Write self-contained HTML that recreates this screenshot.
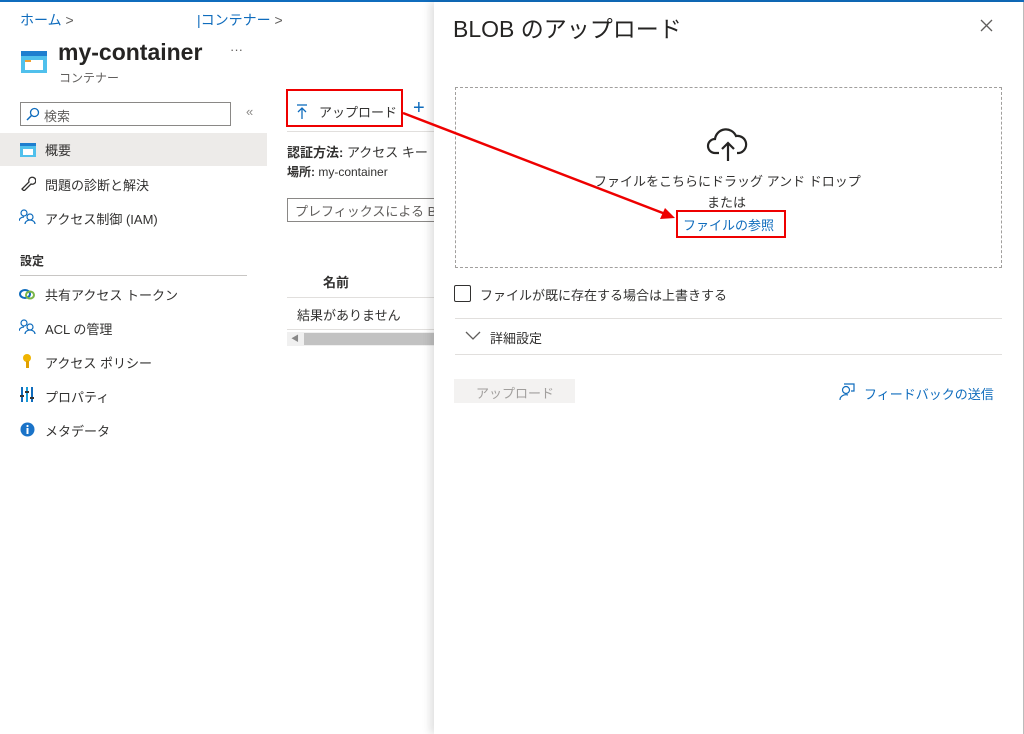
<!DOCTYPE html>
<html><head><meta charset="utf-8"><style>
*{margin:0;padding:0;box-sizing:border-box}
body{width:1024px;height:734px;overflow:hidden;background:#fff;font-family:"Liberation Sans","Noto Sans CJK JP",sans-serif;color:#323130;font-size:13px;position:relative}
.a{position:absolute;white-space:nowrap}
</style></head><body>
<div class="a" style="left:0;top:0;width:1024px;height:2px;background:#0f6cbd"></div>
<div class="a" style="left:20px;top:10px;color:#0f6cbd;font-size:14px">ホーム <span style="color:#605e5c">&gt;</span></div>
<div class="a" style="left:197px;top:10px;color:#0f6cbd;font-size:14px">|コンテナー <span style="color:#605e5c">&gt;</span></div>
<svg class="a" style="left:20px;top:50px" width="28" height="24"><rect x="1" y="1" width="26" height="22" fill="#50c0ec"/><rect x="1" y="1" width="26" height="5" fill="#1e7ecf"/><rect x="5" y="10" width="18" height="10" fill="#fff"/><rect x="5" y="10" width="6" height="2" fill="#f0a030"/></svg>
<div class="a" style="left:58px;top:39px;font-size:23px;font-weight:bold;color:#252423">my-container</div>
<div class="a" style="left:230px;top:42px;color:#605e5c">···</div>
<div class="a" style="left:59px;top:69px;font-size:12px;color:#605e5c">コンテナー</div>
<div class="a" style="left:20px;top:102px;width:211px;height:24px;border:1px solid #8a8886"></div>
<svg class="a" style="left:26px;top:107px" width="14" height="14"><circle cx="8.5" cy="5.5" r="4" fill="none" stroke="#0f6cbd" stroke-width="1.3"/><line x1="5.5" y1="8.5" x2="1" y2="13" stroke="#0f6cbd" stroke-width="1.5"/></svg>
<div class="a" style="left:44px;top:106px;font-size:13px;color:#605e5c">検索</div>
<div class="a" style="left:246px;top:104px;color:#8a8886">«</div>
<div class="a" style="left:0;top:133px;width:267px;height:33px;background:#edebe9"></div>
<svg class="a" style="left:20px;top:143px" width="16" height="14"><rect width="16" height="14" fill="#50c0ec"/><rect width="16" height="3" fill="#1e7ecf"/><rect x="3" y="6" width="10" height="6" fill="#fff"/></svg>
<div class="a" style="left:45px;top:140px">概要</div>
<svg class="a" style="left:20px;top:175px" width="16" height="16"><path d="M2 14l7-7a3.5 3.5 0 1 1 2 2l-7 7z" fill="none" stroke="#323130" stroke-width="1.3"/></svg>
<div class="a" style="left:45px;top:175px">問題の診断と解決</div>
<svg class="a" style="left:19px;top:209px" width="18" height="16"><circle cx="5" cy="4" r="3" fill="none" stroke="#0f6cbd" stroke-width="1.2"/><circle cx="11" cy="8" r="3" fill="none" stroke="#0f6cbd" stroke-width="1.2"/><path d="M6 15a5 4 0 0 1 10 0M0 12a5 4 0 0 1 5-4" fill="none" stroke="#0f6cbd" stroke-width="1.2"/></svg>
<div class="a" style="left:45px;top:209px">アクセス制御 (IAM)</div>
<div class="a" style="left:20px;top:252px;font-size:12px;font-weight:bold">設定</div>
<div class="a" style="left:20px;top:275px;width:227px;height:1px;background:#c8c6c4"></div>
<svg class="a" style="left:19px;top:288px" width="16" height="12"><ellipse cx="6" cy="6" rx="5" ry="4" fill="none" stroke="#0f6cbd" stroke-width="2"/><ellipse cx="11" cy="7" rx="4" ry="3.5" fill="none" stroke="#7ab648" stroke-width="2"/></svg>
<div class="a" style="left:45px;top:285px">共有アクセス トークン</div>
<svg class="a" style="left:19px;top:319px" width="18" height="16"><circle cx="5" cy="4" r="3" fill="none" stroke="#0f6cbd" stroke-width="1.2"/><circle cx="11" cy="8" r="3" fill="none" stroke="#0f6cbd" stroke-width="1.2"/><path d="M6 15a5 4 0 0 1 10 0M0 12a5 4 0 0 1 5-4" fill="none" stroke="#0f6cbd" stroke-width="1.2"/></svg>
<div class="a" style="left:45px;top:319px">ACL の管理</div>
<svg class="a" style="left:22px;top:353px" width="10" height="16"><circle cx="5" cy="5" r="4" fill="#f0b400"/><rect x="4" y="8" width="3" height="7" fill="#e0a000"/></svg>
<div class="a" style="left:45px;top:353px">アクセス ポリシー</div>
<svg class="a" style="left:20px;top:387px" width="14" height="15"><rect x="1" y="0" width="2" height="15" fill="#0f6cbd"/><rect x="6" y="0" width="2" height="15" fill="#1a9bd7"/><rect x="11" y="0" width="2" height="15" fill="#0f6cbd"/><rect x="0" y="8" width="4" height="2" fill="#333"/><rect x="5" y="4" width="4" height="2" fill="#333"/><rect x="10" y="10" width="4" height="2" fill="#333"/></svg>
<div class="a" style="left:45px;top:387px">プロパティ</div>
<svg class="a" style="left:20px;top:422px" width="15" height="15"><circle cx="7.5" cy="7.5" r="7" fill="#1a73c8"/><rect x="6.5" y="6" width="2" height="6" fill="#fff"/><circle cx="7.5" cy="4" r="1.1" fill="#fff"/></svg>
<div class="a" style="left:45px;top:421px">メタデータ</div>
<div class="a" style="left:286px;top:89px;width:117px;height:38px;border:2px solid #e00"></div>
<svg class="a" style="left:296px;top:104px" width="12" height="16"><line x1="1" y1="1" x2="11" y2="1" stroke="#0f6cbd" stroke-width="1.3"/><path d="M6 15V4M2 8l4-4 4 4" fill="none" stroke="#0f6cbd" stroke-width="1.3"/></svg>
<div class="a" style="left:319px;top:102px;font-size:13px">アップロード</div>
<div class="a" style="left:413px;top:97px;color:#0f6cbd;font-size:20px">+</div>
<div class="a" style="left:287px;top:131px;width:147px;height:1px;background:#e1dfdd"></div>
<div class="a" style="left:287px;top:142px;font-size:13px"><b>認証方法:</b> アクセス キー</div>
<div class="a" style="left:287px;top:163px;font-size:12px"><b>場所:</b> my-container</div>
<div class="a" style="left:287px;top:198px;width:160px;height:24px;border:1px solid #8a8886"></div>
<div class="a" style="left:295px;top:201px;color:#605e5c">プレフィックスによる B</div>
<div class="a" style="left:323px;top:272px;font-weight:bold">名前</div>
<div class="a" style="left:287px;top:297px;width:147px;height:1px;background:#e1dfdd"></div>
<div class="a" style="left:297px;top:305px">結果がありません</div>
<div class="a" style="left:287px;top:329px;width:147px;height:1px;background:#e1dfdd"></div>
<div class="a" style="left:287px;top:332px;width:147px;height:14px;background:#f0f0f0"></div>
<div class="a" style="left:304px;top:333px;width:130px;height:12px;background:#c2c2c2"></div>
<div class="a" style="left:291px;top:333px;font-size:8px;color:#888">◀</div>
<!-- panel -->
<div class="a" style="left:434px;top:2px;width:590px;height:732px;background:#fff;box-shadow:-4px 0 8px rgba(0,0,0,.12);border-right:1px solid #bbb"></div>
<div class="a" style="left:453px;top:10px;font-size:23px;color:#252423">BLOB のアップロード</div>
<svg class="a" style="left:980px;top:19px" width="13" height="13"><path d="M1 1l11 11M12 1L1 12" stroke="#605e5c" stroke-width="1.3"/></svg>
<div class="a" style="left:455px;top:87px;width:547px;height:181px;border:1px dashed #a19f9d"></div>
<svg class="a" style="left:706px;top:127px" width="44" height="36" viewBox="0 0 44 36"><path d="M13 26H9a7 7 0 0 1 0-14 11 11 0 0 1 21-3 8 8 0 0 1 3 17h-2" fill="none" stroke="#252423" stroke-width="2.2"/><path d="M22 34V16M16 22l6-6 6 6" fill="none" stroke="#252423" stroke-width="2.2"/></svg>
<div class="a" style="left:594px;top:171px;color:#323130">ファイルをこちらにドラッグ アンド ドロップ</div>
<div class="a" style="left:707px;top:192px">または</div>
<div class="a" style="left:676px;top:210px;width:110px;height:28px;border:2px solid #e00"></div>
<div class="a" style="left:683px;top:215px;color:#0f6cbd">ファイルの参照</div>
<div class="a" style="left:454px;top:285px;width:17px;height:17px;border:1px solid #323130;border-radius:2px"></div>
<div class="a" style="left:480px;top:285px">ファイルが既に存在する場合は上書きする</div>
<div class="a" style="left:455px;top:318px;width:547px;height:1px;background:#e1dfdd"></div>
<svg class="a" style="left:465px;top:331px" width="16" height="10"><path d="M1 1l7 7 7-7" fill="none" stroke="#605e5c" stroke-width="1.3"/></svg>
<div class="a" style="left:490px;top:328px">詳細設定</div>
<div class="a" style="left:455px;top:354px;width:547px;height:1px;background:#e1dfdd"></div>
<div class="a" style="left:454px;top:379px;width:121px;height:24px;background:#f3f2f1"></div>
<div class="a" style="left:476px;top:383px;color:#a19f9d">アップロード</div>
<svg class="a" style="left:838px;top:383px" width="18" height="18"><circle cx="8" cy="7" r="3.5" fill="none" stroke="#0f6cbd" stroke-width="1.2"/><path d="M2 17a6 5 0 0 1 8-5M6 1h10v7h-3" fill="none" stroke="#0f6cbd" stroke-width="1.2"/></svg>
<div class="a" style="left:864px;top:384px;color:#0f6cbd">フィードバックの送信</div>
<svg class="a" style="left:0;top:0" width="1024" height="734"><line x1="403" y1="113" x2="668" y2="215" stroke="#e00" stroke-width="2.5"/><path d="M675 218L660 219L665 208Z" fill="#e00"/></svg>
</body></html>
